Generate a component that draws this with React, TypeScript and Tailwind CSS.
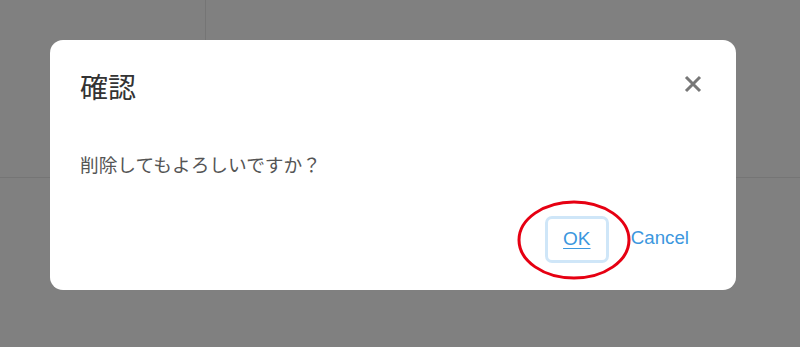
import React from "react";

export default function App() {
  return (
    <div
      className="relative w-[800px] h-[347px] overflow-hidden bg-[#808080]"
      style={{ fontFamily: '"Liberation Sans", "Noto Sans CJK JP", sans-serif' }}
    >
      {/* underlying page seen through the overlay */}
      <div className="h-[178px] border-b border-[#757575]">
        <div className="w-[206px] h-full border-r border-[#757575]" />
      </div>

      {/* dialog layer */}
      <div className="absolute inset-0 pl-[50px] pt-[40px]">
        <div className="w-[686px] h-[250px] bg-white rounded-[13px] flex flex-col">
          <div className="flex items-start justify-between pl-[30px] pr-[34px] pt-[29px]">
            <h2 className="text-[28px] leading-[40px] text-[#333333]">確認</h2>
            <button className="mt-[6px] w-[18px] h-[18px] flex items-center justify-center">
              <svg width="18" height="18" viewBox="0 0 18 18">
                <path d="M2 2 L16 16 M16 2 L2 16" stroke="#777777" strokeWidth="3" strokeLinecap="butt" />
              </svg>
            </button>
          </div>
          <p className="pl-[30px] mt-[43px] text-[18.7px] leading-[28px] text-[#555555]">
            削除してもよろしいですか？
          </p>
          <div className="flex items-center justify-end pr-[47px] mt-[36px]">
            <div className="relative">
              <button className="w-[64px] h-[47px] rounded-[7px] border-[3px] border-[#cfe6f8] flex items-center justify-center text-[19px] text-[#3b97de] underline underline-offset-[3px]">
                OK
              </button>
              <svg
                className="absolute left-[-28px] top-[-16px] pointer-events-none"
                width="116"
                height="82"
                viewBox="0 0 116 82"
              >
                <ellipse cx="57" cy="40" rx="55" ry="38" fill="none" stroke="#e60012" strokeWidth="3" />
              </svg>
            </div>
            <button className="ml-[22px] mb-[3px] text-[18.7px] text-[#3b97de] leading-[24px]">Cancel</button>
          </div>
        </div>
      </div>
    </div>
  );
}
